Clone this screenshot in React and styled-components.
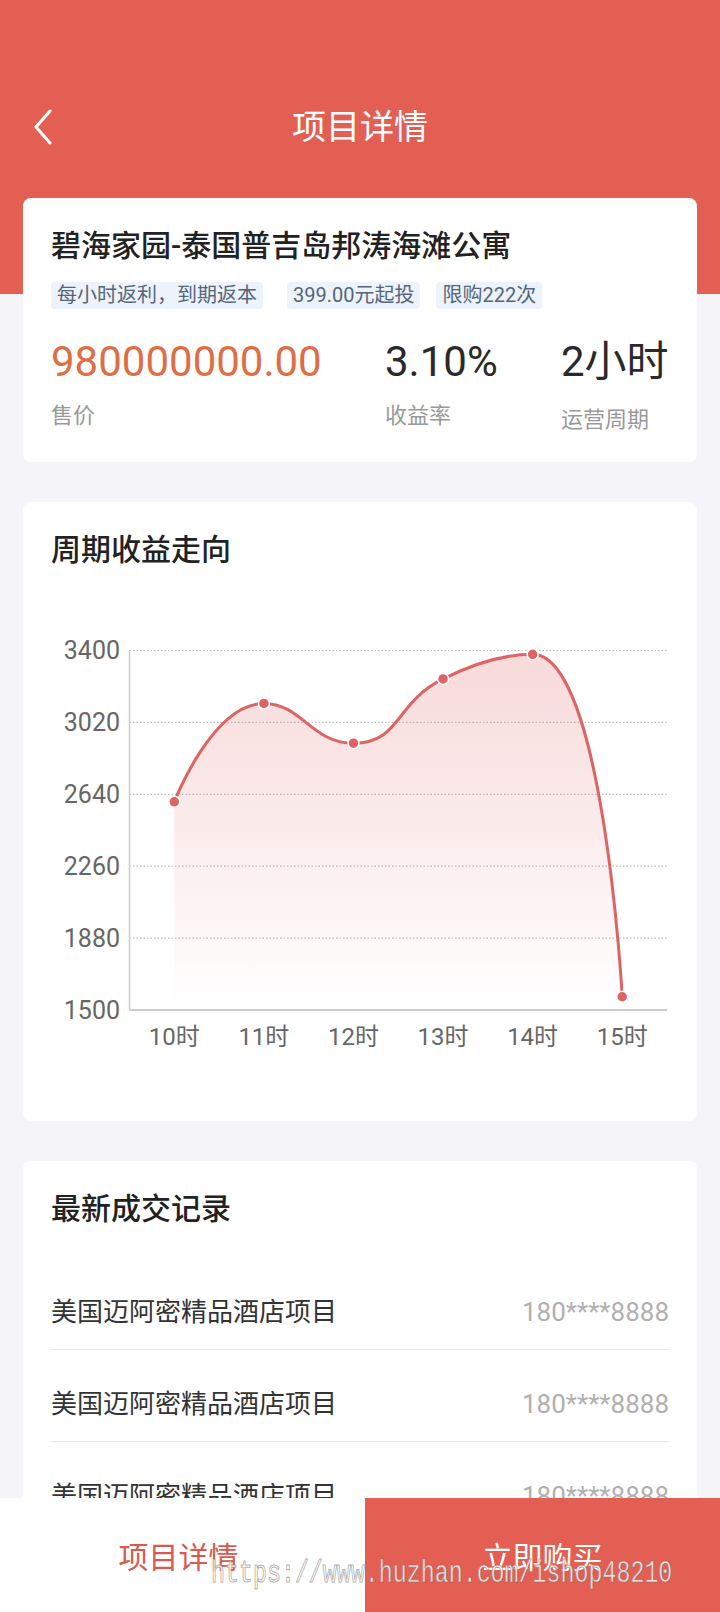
import React from "react";
import styled, { createGlobalStyle } from "styled-components";

const RED = "#E35F53";
const PAGE_BG = "#F4F4F9";

const GlobalStyle = createGlobalStyle`
  html, body { margin: 0; padding: 0; }
  body {
    font-family: Roboto, "Noto Sans CJK SC", sans-serif;
    background: ${PAGE_BG};
  }
  * { box-sizing: border-box; }
`;

const Screen = styled.div`
  height: 100vh;
  display: flex;
  flex-direction: column;
  overflow: hidden;
`;

const Scroll = styled.div`
  flex: 1;
  overflow: hidden;
  background: linear-gradient(${RED} 0, ${RED} 294px, ${PAGE_BG} 294px);
`;

const NavBar = styled.div`
  height: 174px;
  padding-top: 80px;
  display: grid;
  grid-template-columns: 1fr auto 1fr;
  align-items: center;
`;

const BackButton = styled.div`
  padding-left: 33px;
  display: flex;
  align-items: center;
`;

const NavTitle = styled.div`
  color: #fff;
  font-size: 34px;
  line-height: 44px;
  font-weight: 400;
`;

const CardStack = styled.div`
  display: flex;
  flex-direction: column;
  gap: 40px;
  padding: 24px 23px 0;
`;

const Card = styled.div`
  background: #fff;
  border-radius: 8px;
  padding: ${(p) => p.$pad || "28px 28px 28px"};
`;

const CardTitle = styled.div`
  font-size: 30px;
  line-height: 40px;
  font-weight: 500;
  color: #222;
  padding-left: ${(p) => p.$indent || 0}px;
`;

const TagRow = styled.div`
  display: flex;
  margin-top: 16px;
`;

const Tag = styled.span`
  height: 27px;
  line-height: 27px;
  padding: 0 6px;
  margin-right: ${(p) => p.$gap}px;
  border-radius: 4px;
  background: #edf3fa;
  color: #56657a;
  font-size: 20px;
  white-space: nowrap;
`;

const Stats = styled.div`
  display: grid;
  grid-template-columns: 334px 176px 1fr;
  margin-top: 29px;
`;

const StatValue = styled.div`
  font-size: 42px;
  line-height: 48px;
  color: ${(p) => p.$color || "#2a2a2a"};
  white-space: nowrap;
`;

const StatLabel = styled.div`
  margin-top: ${(p) => 16 + (p.$shift || 0)}px;
  font-size: 22px;
  line-height: 28px;
  color: #999;
`;

const ChartSvg = styled.svg`
  display: block;
`;

const RecordList = styled.div`
  margin-top: 29px;
`;

const RecordRow = styled.div`
  display: flex;
  justify-content: space-between;
  align-items: center;
  padding: 36px 0 19px;
  line-height: 36px;
  border-bottom: 1px solid #e8e8e8;
  font-size: 26px;
`;

const RecordName = styled.span`
  color: #333;
`;

const RecordPhone = styled.span`
  color: #b0b0b0;
`;

const Footer = styled.div`
  position: relative;
  height: 114px;
  flex: none;
  display: flex;
`;

const FooterTab = styled.div`
  width: 365px;
  padding-right: 8px;
  background: #fff;
  color: #d85a4e;
  font-size: 30px;
  display: flex;
  align-items: center;
  justify-content: center;
`;

const BuyButton = styled.div`
  flex: 1;
  background: ${RED};
  color: #fff;
  font-size: 30px;
  display: flex;
  align-items: center;
  justify-content: center;
`;

const Watermark = styled.div`
  position: absolute;
  left: 211px;
  top: 62px;
  font-family: "Liberation Mono", monospace;
  font-size: 23.3px;
  line-height: 28px;
  color: rgba(255, 255, 255, 0.85);
  -webkit-text-stroke: 0.8px rgba(110, 110, 110, 0.55);
  transform: scaleY(1.35);
  transform-origin: left center;
  pointer-events: none;
  white-space: nowrap;
`;

// chart data
const hours = ["10时", "11时", "12时", "13时", "14时", "15时"];
const values = [2600, 3120, 2910, 3250, 3380, 1570];
const ticks = [1500, 1880, 2260, 2640, 3020, 3400];
const plot = { left: 106.5, right: 644, top: 80.5, bottom: 440 };
const band = (plot.right - plot.left) / hours.length;
const xOf = (i) => plot.left + band * (i + 0.5);
const yOf = (v) => plot.bottom - ((v - 1500) / 1900) * (plot.bottom - plot.top);

// echarts-like smooth curve with extreme clamping
function smoothPath(pts, smooth = 0.5) {
  let d = `M${pts[0][0]},${pts[0][1]}`;
  let cpx0 = pts[0][0];
  let cpy0 = pts[0][1];
  for (let i = 1; i < pts.length; i++) {
    const [prevX, prevY] = pts[i - 1];
    const [x, y] = pts[i];
    let cpx1 = x;
    let cpy1 = y;
    let nextCpx0 = x;
    let nextCpy0 = y;
    if (i < pts.length - 1) {
      const [nextX, nextY] = pts[i + 1];
      let vx = nextX - prevX;
      let vy = nextY - prevY;
      const lenPrev = Math.hypot(x - prevX, y - prevY);
      const lenNext = Math.hypot(nextX - x, nextY - y);
      const ratio = lenNext / (lenNext + lenPrev);
      nextCpx0 = x + vx * smooth * ratio;
      nextCpy0 = y + vy * smooth * ratio;
      nextCpx0 = Math.max(Math.min(nextCpx0, Math.max(nextX, x)), Math.min(nextX, x));
      nextCpy0 = Math.max(Math.min(nextCpy0, Math.max(nextY, y)), Math.min(nextY, y));
      vx = nextCpx0 - x;
      vy = nextCpy0 - y;
      cpx1 = x - (vx * lenPrev) / lenNext;
      cpy1 = y - (vy * lenPrev) / lenNext;
      cpx1 = Math.max(Math.min(cpx1, Math.max(prevX, x)), Math.min(prevX, x));
      cpy1 = Math.max(Math.min(cpy1, Math.max(prevY, y)), Math.min(prevY, y));
      vx = x - cpx1;
      vy = y - cpy1;
      nextCpx0 = x + (vx * lenNext) / lenPrev;
      nextCpy0 = y + (vy * lenNext) / lenPrev;
    }
    d += ` C${cpx0},${cpy0} ${cpx1},${cpy1} ${x},${y}`;
    cpx0 = nextCpx0;
    cpy0 = nextCpy0;
  }
  return d;
}

const BackIcon = () => (
  <svg width="20" height="36" viewBox="0 0 20 36">
    <path d="M17 2 L3 18 L17 34" fill="none" stroke="#fff" strokeWidth="3" strokeLinecap="round" strokeLinejoin="round" />
  </svg>
);

const TrendChart = () => {
  const pts = values.map((v, i) => [xOf(i), yOf(v)]);
  const line = smoothPath(pts);
  const area = `${line} L${pts[pts.length - 1][0]},${plot.bottom} L${pts[0][0]},${plot.bottom} Z`;
  return (
    <ChartSvg width="674" height="500" viewBox="0 0 674 500">
      <defs>
        <linearGradient id="areaFill" x1="0" y1="0" x2="0" y2="1">
          <stop offset="0" stopColor="#e06464" stopOpacity="0.24" />
          <stop offset="1" stopColor="#e06464" stopOpacity="0" />
        </linearGradient>
      </defs>
      {ticks.map((t) => (
        <g key={t}>
          {t !== 1500 && (
            <line x1={plot.left} x2={plot.right} y1={yOf(t)} y2={yOf(t)} stroke="#bdbdbd" strokeWidth="1.2" strokeDasharray="1.5 2" />
          )}
          <text x="97" y={yOf(t)} dy="8.5" textAnchor="end" fontSize="25" fill="#666" fontFamily="Roboto, sans-serif">
            {t}
          </text>
        </g>
      ))}
      <path d={area} fill="url(#areaFill)" />
      <line x1={plot.left} x2={plot.left} y1={plot.top} y2={plot.bottom} stroke="#ccc" strokeWidth="1.5" />
      <line x1={plot.left} x2={plot.right} y1={plot.bottom} y2={plot.bottom} stroke="#ccc" strokeWidth="2" />
      <path d={line} fill="none" stroke="#de6464" strokeWidth="3" />
      {pts.map(([x, y], i) => (
        <circle key={i} cx={x} cy={y} r="5.5" fill="#de6464" stroke="#fff" strokeWidth="1.5" />
      ))}
      {hours.map((h, i) => (
        <text key={h} x={xOf(i)} y="475" textAnchor="middle" fontSize="24" fill="#666" fontFamily='Roboto, "Noto Sans CJK SC", sans-serif'>
          {h}
        </text>
      ))}
    </ChartSvg>
  );
};

const records = [
  { name: "美国迈阿密精品酒店项目", phone: "180****8888" },
  { name: "美国迈阿密精品酒店项目", phone: "180****8888" },
  { name: "美国迈阿密精品酒店项目", phone: "180****8888" },
  { name: "美国迈阿密精品酒店项目", phone: "180****8888" },
];

export default function App() {
  return (
    <>
      <GlobalStyle />
      <Screen>
        <Scroll>
          <NavBar>
            <BackButton>
              <BackIcon />
            </BackButton>
            <NavTitle>项目详情</NavTitle>
            <div />
          </NavBar>

          <CardStack>
            <Card>
              <CardTitle>碧海家园-泰国普吉岛邦涛海滩公寓</CardTitle>
              <TagRow>
                <Tag $gap={24}>每小时返利，到期返本</Tag>
                <Tag $gap={16}>399.00元起投</Tag>
                <Tag $gap={0}>限购222次</Tag>
              </TagRow>
              <Stats>
                <div>
                  <StatValue $color="#df6d45">980000000.00</StatValue>
                  <StatLabel>售价</StatLabel>
                </div>
                <div>
                  <StatValue>3.10%</StatValue>
                  <StatLabel>收益率</StatLabel>
                </div>
                <div>
                  <StatValue>2小时</StatValue>
                  <StatLabel $shift={4}>运营周期</StatLabel>
                </div>
              </Stats>
            </Card>

            <Card $pad="28px 0 51px">
              <CardTitle $indent={28}>周期收益走向</CardTitle>
              <TrendChart />
            </Card>

            <Card $pad="28px 28px 0">
              <CardTitle>最新成交记录</CardTitle>
              <RecordList>
                {records.map((r, i) => (
                  <RecordRow key={i}>
                    <RecordName>{r.name}</RecordName>
                    <RecordPhone>{r.phone}</RecordPhone>
                  </RecordRow>
                ))}
              </RecordList>
            </Card>
          </CardStack>
        </Scroll>

        <Footer>
          <FooterTab>项目详情</FooterTab>
          <BuyButton>立即购买</BuyButton>
          <Watermark>https://www.huzhan.com/ishop48210</Watermark>
        </Footer>
      </Screen>
    </>
  );
}
